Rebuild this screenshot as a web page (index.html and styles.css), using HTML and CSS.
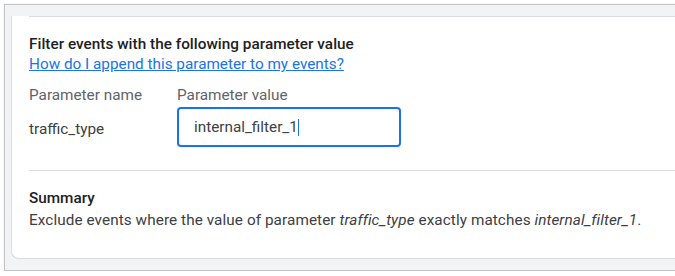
FILE: index.html
```html
<!DOCTYPE html>
<html lang="en">
<head>
<meta charset="utf-8">
<title>Filter parameter</title>
<link rel="stylesheet" href="styles.css">
</head>
<body>
<div class="frame">
  <div class="card">
    <div class="rule rule-top"></div>
    <h2 class="heading">Filter events with the following parameter value</h2>
    <div class="help-line"><a class="help" href="#">How do I append this parameter to my events?</a></div>
    <div class="param-grid">
      <div class="col-label">Parameter name</div>
      <div class="col-label">Parameter value</div>
      <div class="param-name">traffic_type</div>
      <div class="value-field"><span class="value-text">internal_filter_1</span><span class="caret"></span></div>
    </div>
    <div class="rule rule-mid"></div>
    <h3 class="summary-title">Summary</h3>
    <p class="summary-text">Exclude events where the value of parameter <em>traffic_type</em> exactly matches <em>internal_filter_1</em>.</p>
  </div>
</div>
</body>
</html>
```

FILE: styles.css
```css
html, body {
  margin: 0;
  padding: 0;
  background: #ffffff;
}
body {
  font-family: Roboto, "Liberation Sans", Arial, sans-serif;
  color: #202124;
}
.frame {
  margin: 4px 0 0 4px;
  width: 664px;
  height: 265px;
  border: 1px solid #c3c3c3;
  background: #f1f3f4;
  overflow: hidden;
  padding: 0 0 0 6px;
  box-sizing: content-box;
  box-shadow: 0 0 2px rgba(0,0,0,0.08);
}
.card {
  background: #ffffff;
  border-left: 1px solid #dadce0;
  border-bottom: 1px solid #dadce0;
  border-bottom-left-radius: 8px;
  padding: 0 0 28px 17px;
  margin-right: -20px;
}
.rule {
  height: 1px;
  background: #dadce0;
}
.rule-top {
  margin-top: 11px;
}
.heading {
  margin: 17px 0 0 0;
  font-size: 15.3px;
  line-height: 20px;
  font-weight: 500;
  letter-spacing: 0.03px;
  color: #202124;
}
.help-line {
  font-size: 15.3px;
  line-height: 21px;
}
.help {
  color: #1a73e8;
  text-decoration: underline;
}
.param-grid {
  display: grid;
  grid-template-columns: 148px 224px;
  grid-template-rows: 20px 40px;
  row-gap: 2px;
  margin-top: 10px;
  align-items: center;
}
.col-label {
  font-size: 15.3px;
  line-height: 20px;
  color: #5f6368;
}
.param-name {
  font-size: 15.3px;
  line-height: 20px;
  color: #3c4043;
  padding-top: 4px;
}
.value-field {
  box-sizing: border-box;
  height: 40px;
  border: 2px solid #1a73e8;
  border-radius: 4px;
  padding: 0 0 0 15px;
  display: flex;
  align-items: center;
  font-size: 15.3px;
  color: #3c4043;
}
.caret {
  display: inline-block;
  width: 1px;
  height: 17px;
  background: #1a73e8;
}
.rule-mid {
  margin-top: 23px;
}
.summary-title {
  margin: 17px 0 0 0;
  font-size: 15.3px;
  line-height: 20px;
  font-weight: 500;
  color: #202124;
}
.summary-text {
  margin: 2px 0 0 0;
  font-size: 15.3px;
  line-height: 20px;
  letter-spacing: 0.08px;
  color: #3c4043;
}
```
